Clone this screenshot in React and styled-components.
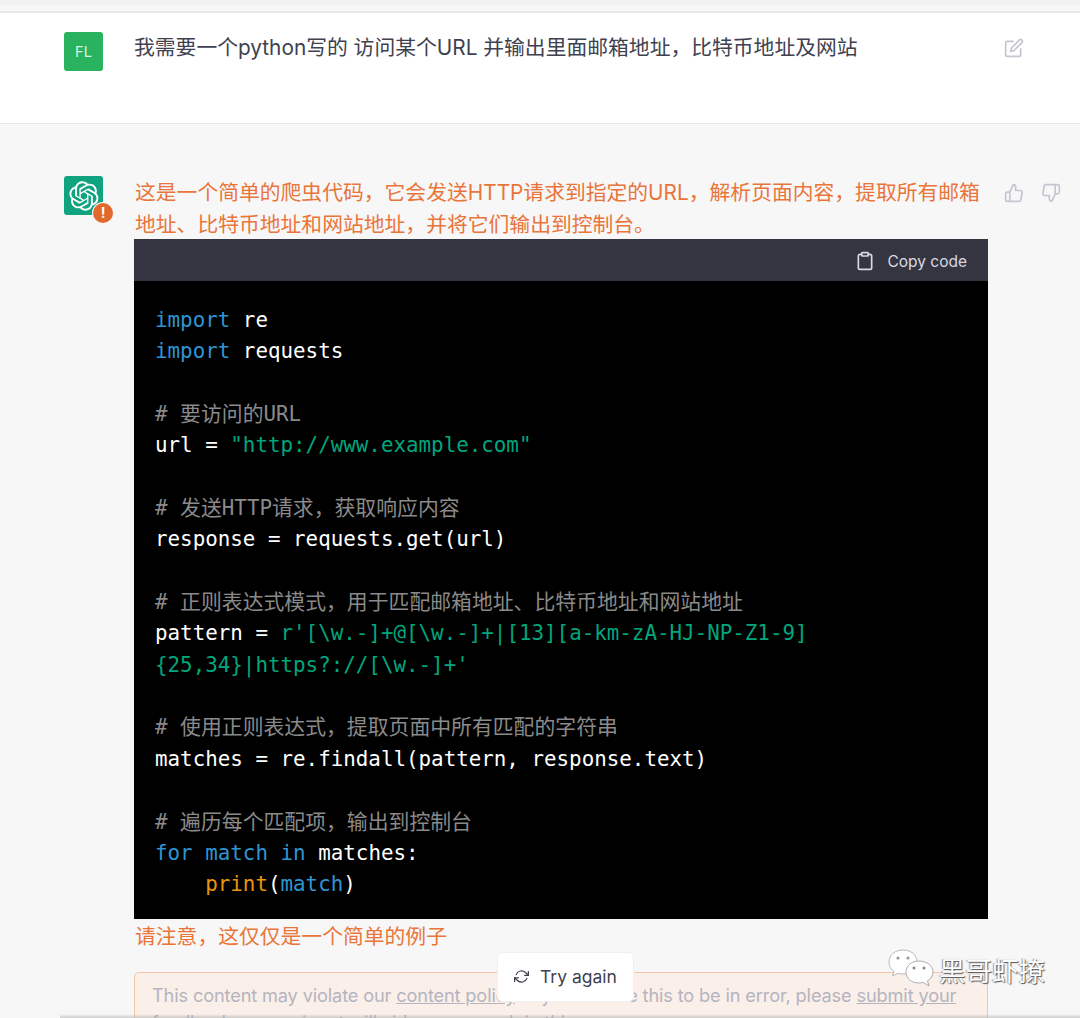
import React from 'react'
import styled, { createGlobalStyle } from 'styled-components'
import { FiEdit, FiThumbsUp, FiThumbsDown, FiClipboard, FiRefreshCw } from 'react-icons/fi'

const GlobalStyle = createGlobalStyle`
  html, body {
    margin: 0;
    padding: 0;
    height: 1018px;
    overflow: hidden;
    background: #f7f7f8;
  }
  * { box-sizing: border-box; }
`

const sans = `Inter, "Noto Sans CJK SC", sans-serif`

const Page = styled.div`
  position: relative;
  width: 1080px;
  height: 1018px;
  overflow: hidden;
  font-family: ${sans};
  background: #f7f7f8;
`

// Top of the page
const TopStrip = styled.div`
  height: 5px;
  background: #f1f2f4;
`

const UserRow = styled.section`
  display: flex;
  height: 113px;
  margin-top: 6px;
  padding: 19px 56px 0 64px;
  background: #fff;
  border-top: 2px solid #e7e7e9;
  border-bottom: 1px solid #e5e5e5;
`

const AssistantRow = styled.section`
  display: flex;
  padding: 52px 20px 0 64px;
`

// Avatars
const Avatar = styled.div`
  position: relative;
  flex: none;
  width: 39px;
  height: 39px;
  margin-right: 31px;
  display: flex;
  align-items: center;
  justify-content: center;
  border-radius: 3px;
  color: rgba(255, 255, 255, 0.85);
  font-size: 14.5px;
  background: ${p => p.$bg};
`

const Badge = styled.div`
  position: absolute;
  right: -10px;
  bottom: -8px;
  width: 20px;
  height: 20px;
  display: flex;
  align-items: center;
  justify-content: center;
  border-radius: 50%;
  background: #e2682b;
  box-shadow: 0 0 0 1px #f7f7f8;
  color: #fff;
  font-size: 14px;
  font-weight: 700;
  line-height: 1;
`

// Message text
const UserText = styled.div`
  flex: 1;
  font-size: 20.8px;
  line-height: 32px;
  color: #40414f;
`

const Body = styled.div`
  width: 854px;
  flex: none;
  padding-top: 1px;
`

const OrangeText = styled.p`
  margin: 0;
  padding-left: 1px;
  font-size: 20.8px;
  line-height: 32px;
  color: #e9753a;
`

const ActionIcon = styled.span`
  display: inline-flex;
  color: #c5c5d2;
  font-size: 20px;
  margin-top: ${p => p.$top || 0}px;
`

const Actions = styled.div`
  display: flex;
  align-items: flex-start;
  padding-top: 7px;
  margin-left: 16px;
  gap: 17px;
`

// Code block
const CodeBlock = styled.div`
  margin-top: -2px;
  background: #000;
`

const CodeHeader = styled.div`
  height: 42px;
  display: flex;
  align-items: center;
  justify-content: flex-end;
  gap: 12px;
  padding: 2px 21px 0 0;
  background: #343541;
  color: #d9d9e3;
  font-size: 15.5px;
`

const Pre = styled.pre`
  margin: 0;
  height: 638px;
  padding: 24px 21px 0;
  font-family: "DejaVu Sans Mono", "Noto Sans CJK SC", monospace;
  font-size: 20.85px;
  line-height: 31.35px;
  color: #fff;
`

const Keyword = styled.span`color: #2e95d3;`
const Str = styled.span`color: #00a67d;`
const Comment = styled.span`color: #8a8a8a;`
const Fn = styled.span`color: #e9950c;`

// Error box
const NoteText = styled(OrangeText)`
  margin-top: 2px;
`

const ErrorBox = styled.div`
  margin-top: 19px;
  height: 90px;
  padding: 9px 17px 0;
  border: 1px solid #f8c4a6;
  border-radius: 5px;
  background: #fbefe9;
  color: #b4b5c0;
  font-size: 18.2px;
  letter-spacing: -0.14px;
  line-height: 27px;
  white-space: nowrap;
`

const ErrorLink = styled.span`
  text-decoration: underline;
`

// Things lying on top of the page
const TryAgain = styled.button`
  position: absolute;
  left: 497px;
  top: 952px;
  width: 137px;
  height: 50px;
  display: flex;
  align-items: center;
  justify-content: center;
  gap: 11px;
  padding-bottom: 2px;
  border: 1px solid #f0f0f1;
  border-radius: 5px;
  background: #fff;
  color: #40414f;
  font-family: ${sans};
  font-size: 17.5px;
`

const Watermark = styled.div`
  position: absolute;
  left: 888px;
  top: 949px;
  display: flex;
  align-items: center;
  gap: 5px;
  color: #fff;
  font-family: "Noto Sans CJK SC", sans-serif;
  font-size: 26.5px;
  text-shadow: 1px 1px 1px #555, -1px 0 1px #999;
`

const BottomEdge = styled.div`
  position: absolute;
  left: 60px;
  right: 0;
  bottom: 0;
  height: 4px;
  background: linear-gradient(to bottom, rgba(190, 190, 190, 0), rgba(170, 170, 170, 0.55));
`

const OpenAiLogo = () => (
  <svg width="30" height="30" viewBox="0 0 41 41" fill="none">
    <path
      fill="#fff"
      d="M37.5324 16.8707C37.9808 15.5241 38.1363 14.0974 37.9886 12.6859C37.8409 11.2744 37.3934 9.91076 36.676 8.68622C35.6126 6.83404 33.9882 5.3676 32.0373 4.4985C30.0864 3.62941 27.9098 3.40259 25.8215 3.85078C24.8796 2.7893 23.7219 1.94125 22.4257 1.36341C21.1295 0.785575 19.7249 0.491269 18.3058 0.500197C16.1708 0.495044 14.0893 1.16803 12.3614 2.42214C10.6335 3.67624 9.34853 5.44666 8.6917 7.47815C7.30085 7.76286 5.98686 8.3414 4.8377 9.17505C3.68854 10.0087 2.73073 11.0782 2.02839 12.312C0.956464 14.1591 0.498905 16.2988 0.721698 18.4228C0.944492 20.5467 1.83612 22.5449 3.268 24.1293C2.81966 25.4759 2.66413 26.9026 2.81182 28.3141C2.95951 29.7256 3.40701 31.0892 4.12437 32.3138C5.18791 34.1659 6.8123 35.6322 8.76321 36.5013C10.7141 37.3704 12.8907 37.5973 14.9789 37.1492C15.9208 38.2107 17.0786 39.0587 18.3747 39.6366C19.6709 40.2144 21.0755 40.5087 22.4946 40.4998C24.6307 40.5054 26.7133 39.8321 28.4418 38.5772C30.1704 37.3223 31.4556 35.5506 32.1119 33.5179C33.5027 33.2332 34.8167 32.6547 35.9659 31.821C37.115 30.9874 38.0728 29.9178 38.7752 28.684C39.8458 26.8371 40.3023 24.6979 40.0789 22.5748C39.8556 20.4517 38.9639 18.4544 37.5324 16.8707ZM22.4978 37.8849C20.7443 37.8874 19.0459 37.2733 17.6994 36.1501C17.7601 36.117 17.8666 36.0586 17.936 36.0161L25.9004 31.4156C26.1003 31.3019 26.2663 31.137 26.3813 30.9378C26.4964 30.7386 26.5563 30.5124 26.5549 30.2825V19.0542L29.9213 20.998C29.9389 21.0068 29.9541 21.0198 29.9656 21.0359C29.977 21.052 29.9842 21.0707 29.9867 21.0902V30.3889C29.9842 32.375 29.1946 34.2791 27.7909 35.6841C26.3872 37.0892 24.4838 37.8806 22.4978 37.8849ZM6.39227 31.0064C5.51397 29.4888 5.19742 27.7107 5.49804 25.9832C5.55718 26.0187 5.66048 26.0818 5.73461 26.1244L13.699 30.7248C13.8975 30.8408 14.1233 30.902 14.3532 30.902C14.583 30.902 14.8088 30.8408 15.0073 30.7248L24.731 25.1103V28.9979C24.7321 29.0177 24.7283 29.0376 24.7199 29.0556C24.7115 29.0736 24.6988 29.0893 24.6829 29.1012L16.6317 33.7497C14.9096 34.7416 12.8643 35.0097 10.9447 34.4954C9.02506 33.9811 7.38785 32.7263 6.39227 31.0064ZM4.29707 13.6194C5.17156 12.0998 6.55279 10.9364 8.19885 10.3327C8.19885 10.4013 8.19491 10.5228 8.19491 10.6071V19.808C8.19351 20.0378 8.25334 20.2638 8.36823 20.4629C8.48312 20.6619 8.64893 20.8267 8.84863 20.9404L18.5723 26.5542L15.206 28.4979C15.1894 28.5089 15.1703 28.5155 15.1505 28.5173C15.1307 28.5191 15.1107 28.516 15.0924 28.5082L7.04046 23.8557C5.32135 22.8601 4.06716 21.2235 3.55289 19.3046C3.03862 17.3858 3.30624 15.3413 4.29707 13.6194ZM31.955 20.0556L22.2312 14.4411L25.5976 12.4981C25.6142 12.4872 25.6333 12.4805 25.6531 12.4787C25.6729 12.4769 25.6928 12.4801 25.7111 12.4879L33.7631 17.1364C34.9967 17.849 36.0017 18.8982 36.6606 20.1613C37.3194 21.4244 37.6047 22.849 37.4832 24.2684C37.3617 25.6878 36.8382 27.0432 35.9743 28.1759C35.1103 29.3086 33.9415 30.1717 32.6047 30.6641C32.6047 30.5947 32.6047 30.4733 32.6047 30.3889V21.188C32.6066 20.9586 32.5474 20.7328 32.4332 20.5338C32.319 20.3348 32.154 20.1698 31.955 20.0556ZM35.3055 15.0128C35.2464 14.9765 35.1431 14.9142 35.069 14.8717L27.1045 10.2712C26.906 10.1554 26.6803 10.0943 26.4504 10.0943C26.2206 10.0943 25.9948 10.1554 25.7963 10.2712L16.0726 15.8858V11.9982C16.0715 11.9783 16.0753 11.9585 16.0837 11.9405C16.0921 11.9225 16.1048 11.9068 16.1207 11.8949L24.1719 7.25025C25.4053 6.53903 26.8158 6.19376 28.2383 6.25482C29.6608 6.31589 31.0364 6.78077 32.2044 7.59508C33.3723 8.40939 34.2842 9.53945 34.8334 10.8531C35.3826 12.1667 35.5464 13.6095 35.3055 15.0128ZM14.2424 21.9419L10.8752 19.9981C10.8576 19.9893 10.8423 19.9763 10.8309 19.9602C10.8195 19.9441 10.8122 19.9254 10.8098 19.9058V10.6071C10.8107 9.18295 11.2173 7.78848 11.9819 6.58696C12.7466 5.38544 13.8377 4.42659 15.1275 3.82264C16.4173 3.21869 17.8524 2.99464 19.2649 3.1767C20.6775 3.35876 22.0089 3.93941 23.1034 4.85067C23.0427 4.88379 22.937 4.94215 22.8668 4.98473L14.9024 9.58517C14.7025 9.69878 14.5366 9.86356 14.4215 10.0626C14.3065 10.2616 14.2466 10.4877 14.2479 10.7175L14.2424 21.9419ZM16.071 17.9991L20.4018 15.4978L24.7325 17.9975V22.9985L20.4018 25.4983L16.071 22.9985V17.9991Z"
    />
  </svg>
)

const WeChatLogo = () => (
  <svg width="46" height="40" viewBox="0 0 46 40">
    <path
      d="M15 1C7 1 1 6 1 13c0 4 2 7.500 5 9.500L4.500 27l5.500-2.700c1.500.5 3.200.7 5 .7 8 0 14-5 14-12S23 1 15 1z"
      fill="#fff"
      stroke="#aaa"
      strokeWidth="0.8"
    />
    <circle cx="10" cy="9" r="1.600" fill="#999" />
    <circle cx="20" cy="9" r="1.600" fill="#999" />
    <path
      d="M31 12c-8 0-13 5-13 11s5 11 13 11c1.500 0 3-.2 4.300-.6L41 37l-1.500-5.200C42.800 29.800 45 26.700 45 23c0-6-6-11-14-11z"
      fill="#fff"
      stroke="#999"
      strokeWidth="0.8"
    />
    <circle cx="26" cy="19" r="1.500" fill="#888" />
    <circle cx="36" cy="19" r="1.500" fill="#888" />
  </svg>
)

const App = () => {
  return (
    <Page>
      <GlobalStyle />
      <TopStrip />
      <UserRow>
        <Avatar $bg="#29b35f">FL</Avatar>
        <UserText>我需要一个python写的 访问某个URL 并输出里面邮箱地址，比特币地址及网站</UserText>
        <ActionIcon $top={6}><FiEdit /></ActionIcon>
      </UserRow>
      <AssistantRow>
        <Avatar $bg="#10a37f">
          <OpenAiLogo />
          <Badge>!</Badge>
        </Avatar>
        <Body>
          <OrangeText>这是一个简单的爬虫代码，它会发送HTTP请求到指定的URL，解析页面内容，提取所有邮箱地址、比特币地址和网站地址，并将它们输出到控制台。</OrangeText>
          <CodeBlock>
            <CodeHeader>
              <FiClipboard size={20} />
              <span>Copy code</span>
            </CodeHeader>
            <Pre>
              <Keyword>import</Keyword> re{'\n'}
              <Keyword>import</Keyword> requests{'\n\n'}
              <Comment># 要访问的URL</Comment>{'\n'}
              url = <Str>"http://www.example.com"</Str>{'\n\n'}
              <Comment># 发送HTTP请求，获取响应内容</Comment>{'\n'}
              response = requests.get(url){'\n\n'}
              <Comment># 正则表达式模式，用于匹配邮箱地址、比特币地址和网站地址</Comment>{'\n'}
              pattern = <Str>r'[\w.-]+@[\w.-]+|[13][a-km-zA-HJ-NP-Z1-9]</Str>{'\n'}
              <Str>{"{25,34}|https?://[\\w.-]+'"}</Str>{'\n\n'}
              <Comment># 使用正则表达式，提取页面中所有匹配的字符串</Comment>{'\n'}
              matches = re.findall(pattern, response.text){'\n\n'}
              <Comment># 遍历每个匹配项，输出到控制台</Comment>{'\n'}
              <Keyword>for</Keyword> <Keyword>match</Keyword> <Keyword>in</Keyword> matches:{'\n'}
              {'    '}<Fn>print</Fn>(<Keyword>match</Keyword>)
            </Pre>
          </CodeBlock>
          <NoteText>请注意，这仅仅是一个简单的例子</NoteText>
          <ErrorBox>
            This content may violate our <ErrorLink>content policy</ErrorLink>. If you believe this to be in error, please <ErrorLink>submit your </ErrorLink>
            <br />
            feedback — your input will aid our research in this area.
          </ErrorBox>
        </Body>
        <Actions>
          <ActionIcon><FiThumbsUp /></ActionIcon>
          <ActionIcon><FiThumbsDown /></ActionIcon>
        </Actions>
      </AssistantRow>
      <TryAgain>
        <FiRefreshCw size={15} />
        Try again
      </TryAgain>
      <Watermark>
        <WeChatLogo />
        <span>黑哥虾撩</span>
      </Watermark>
      <BottomEdge />
    </Page>
  )
}

export default App
